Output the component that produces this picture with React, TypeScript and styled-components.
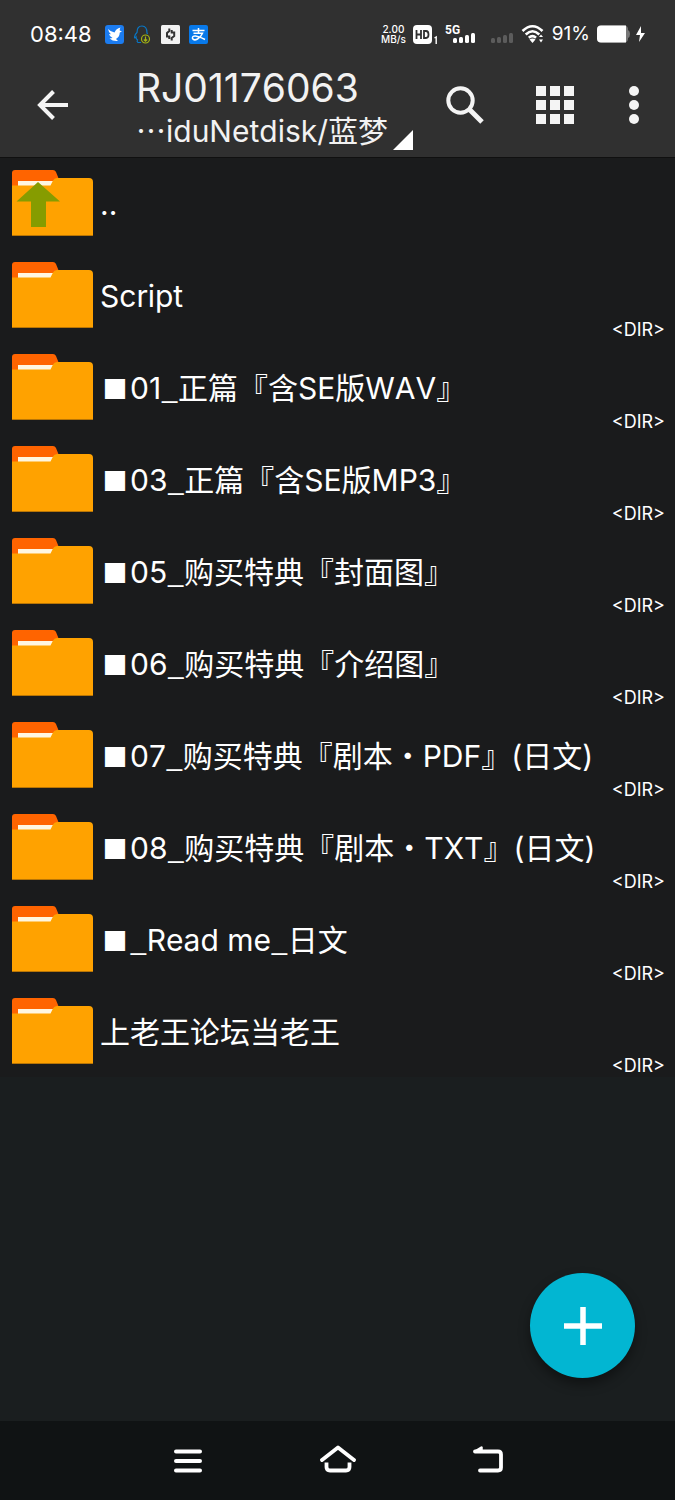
import React from "react";
import styled, { createGlobalStyle } from "styled-components";

const GlobalStyle = createGlobalStyle`
  *, *::before, *::after { box-sizing: border-box; }
  body {
    margin: 0;
    background: #1a1e1f;
    color: #fff;
    font-family: Inter, "Noto Sans CJK SC", sans-serif;
    font-kerning: none;
  }
`;

const Page = styled.div`
  display: flex;
  flex-direction: column;
  min-height: 100vh;
`;

const Header = styled.header`
  position: relative;
  z-index: 1;
  background: #303030;
  box-shadow: 0 1px 0 #101010;
`;

const StatusBar = styled.div`
  display: flex;
  align-items: center;
  justify-content: space-between;
  height: 66px;
  padding: 2px 29px 0 30px;
`;

const StatusGroup = styled.div<{ $gap: number }>`
  display: flex;
  align-items: center;
  gap: ${(p) => p.$gap}px;
  svg { display: block; flex: none; }
`;

const Clock = styled.time`
  margin-right: 4px;
  font-size: 22px;
  line-height: 32px;
`;

const Speed = styled.div`
  font-size: 10px;
  line-height: 10px;
  font-weight: 500;
  text-align: center;
`;

const Percent = styled.span`
  font-size: 19px;
  line-height: 24px;
`;

const Toolbar = styled.div`
  display: flex;
  align-items: flex-start;
  height: 91px;
  padding-right: 7px;
`;

const IconButton = styled.button<{ $width: number }>`
  display: flex;
  align-items: center;
  justify-content: center;
  flex: none;
  width: ${(p) => p.$width}px;
  height: 78px;
  padding: 0;
  border: 0;
  background: none;
  color: #f4f4f4;
  cursor: pointer;
`;

const TitleBlock = styled.div`
  flex: 1;
  min-width: 0;
  padding-left: 30px;
  color: #f2f2f2;
`;

const Title = styled.h1`
  margin: 0;
  font-size: 39px;
  line-height: 44px;
  font-weight: 400;
  white-space: nowrap;
`;

const PathButton = styled.button`
  display: flex;
  align-items: flex-end;
  gap: 5px;
  padding: 0;
  border: 0;
  background: none;
  color: inherit;
  font: inherit;
  font-size: 30px;
  line-height: 38px;
  white-space: nowrap;
  cursor: pointer;
`;

const PathText = styled.span`
  padding-top: 2px;
`;

const Main = styled.main`
  position: relative;
  flex: 1;
`;

const FileList = styled.ul`
  margin: 0;
  padding: 0;
  list-style: none;
  background: #1a1b1c;
`;

const FileRow = styled.button`
  display: flex;
  align-items: center;
  width: 100%;
  height: 92px;
  padding: 0 10px 0 12px;
  border: 0;
  background: none;
  color: #fff;
  font: inherit;
  font-kerning: none;
  text-align: left;
  cursor: pointer;
  svg { display: block; flex: none; }
`;

const FileName = styled.span`
  flex: 1;
  min-width: 0;
  padding: 2px 0 0 7px;
  font-size: 30px;
  line-height: 40px;
  white-space: nowrap;
`;

const WideGlyph = styled.span`
  font-family: "Noto Sans CJK SC", sans-serif;
  line-height: 1;
`;

const Square = styled(WideGlyph)`
  display: inline-block;
  width: 30px;
  font-size: 25px;
  text-align: center;
`;

const FileKind = styled.span`
  align-self: flex-end;
  font-size: 18px;
  line-height: 22px;
`;

const AddButton = styled.button`
  position: absolute;
  right: 40px;
  bottom: 43px;
  display: flex;
  align-items: center;
  justify-content: center;
  width: 105px;
  height: 105px;
  padding: 0;
  border: 0;
  border-radius: 50%;
  background: #02b6d2;
  box-shadow: 0 6px 12px rgba(0, 0, 0, 0.4);
  cursor: pointer;
`;

const NavBar = styled.nav`
  display: flex;
  justify-content: center;
  height: 79px;
  background: #101314;
`;

const NavButton = styled(IconButton)`
  height: 79px;
`;

const Folder = ({ up }: { up?: boolean }) => (
  <svg width="81" height="66" viewBox="0 0 81 66" aria-hidden="true">
    <path d="M0 20V3Q0 0 3 0H41Q43 0 44 2L48 12V20Z" fill="#ff6400" />
    <path d="M6 11H42L39 16H6Z" fill="#fff6e0" />
    <path d="M0 15.5H38.5L41 10.5Q42.3 8 45 8H77Q81 8 81 12V66H0Z" fill="#ffa200" />
    <path d="M0 65.500H81" stroke="#b87506" strokeWidth="1" />
    {up && <path d="M26 12L48 31.500H34V57H19V31.500H4.500Z" fill="#869c00" />}
  </svg>
);

const Signal = ({ dim }: { dim?: boolean }) => (
  <g fill={dim ? "#5c5c5c" : "#fff"}>
    <rect x="0" y="14" width="4" height="5" rx="1.500" />
    <rect x="6" y="13" width="4" height="6" rx="1.500" />
    <rect x="12" y="11" width="4" height="8" rx="1.500" />
    <rect x="18" y="9" width="4" height="10" rx="1.500" />
  </g>
);

// Underscores and squares take their shapes from the CJK family.
const renderName = (name: string) =>
  name.split(/([■_])/).map((part, i) => {
    if (part === "■") return <Square key={i}>{part}</Square>;
    if (part === "_") return <WideGlyph key={i}>{part}</WideGlyph>;
    return part;
  });

const files = [
  "Script",
  "■01_正篇『含SE版WAV』",
  "■03_正篇『含SE版MP3』",
  "■05_购买特典『封面图』",
  "■06_购买特典『介绍图』",
  "■07_购买特典『剧本・PDF』(日文)",
  "■08_购买特典『剧本・TXT』(日文)",
  "■_Read me_日文",
  "上老王论坛当老王",
];

export default function App() {
  return (
    <Page lang="zh-CN">
      <GlobalStyle />
      <Header>
        <StatusBar>
          <StatusGroup $gap={9}>
            <Clock>08:48</Clock>
            <svg width="19" height="19" viewBox="0 0 19 19" aria-hidden="true">
              <rect width="19" height="19" rx="3" fill="#1c7cf0" />
              <path d="M3 4Q6 7 9.500 7.500Q11 3.500 15.500 2.500Q14.500 4 14.700 5.500L17 6.500L14.800 7.500Q14.500 12 11 14L13 16Q8 16.500 4.500 13.500L7.500 13Q4.500 11.500 4 9L6 9.200Q3.500 7 3 4Z" fill="#fff" />
            </svg>
            <svg width="19" height="19" viewBox="0 0 19 19" fill="none" aria-hidden="true">
              <path d="M8 17.500H5Q3.500 16.500 4.500 15Q3 14 3 12Q1.500 14 1.500 12Q2 9 4 7.500Q4 1 9 1Q14 1 14 8L14.500 9" stroke="#0878c8" strokeWidth="1.200" />
              <circle cx="12.500" cy="14" r="4" stroke="#a4b414" strokeWidth="1.200" />
              <path d="M12.500 11.500V16M10.800 14.500L12.500 16.200L14.200 14.500" stroke="#a4b414" strokeWidth="1.200" />
            </svg>
            <svg width="19" height="19" viewBox="0 0 19 19" fill="none" aria-hidden="true">
              <rect width="19" height="19" rx="1.500" fill="#f2f2f2" />
              <path d="M8.300 3.500V6L6 8V11.500H8.300V14M10.700 15.500V13L13.200 11V7.500H10.700V5" stroke="#333" strokeWidth="2" />
            </svg>
            <svg width="19" height="19" viewBox="0 0 19 19" fill="none" aria-hidden="true">
              <rect width="19" height="19" rx="2" fill="#0879ea" />
              <path d="M3.500 5.500H15.500M9.500 3V8M4.500 8.300H13.500Q12 12 8.500 14Q5 16 3.500 13.500Q3 10.800 6.500 11Q10 11.500 16 14.500" stroke="#fff" strokeWidth="1.500" />
            </svg>
          </StatusGroup>
          <StatusGroup $gap={7}>
            <Speed>
              <div>2.00</div>
              <div>MB/s</div>
            </Speed>
            <svg width="25" height="19" viewBox="0 0 25 19" aria-hidden="true">
              <rect width="19" height="19" rx="4" fill="#fff" />
              <path d="M3.500 5V14M8 5V14M3.500 9.500H8M11 6H13Q15.500 6 15.500 9.500Q15.500 13 13 13H11Z" fill="none" stroke="#303030" strokeWidth="1.800" />
              <path d="M21.500 13L23.200 12V19" fill="none" stroke="#fff" strokeWidth="1.400" />
            </svg>
            <svg width="69" height="20" viewBox="0 0 69 20" aria-label="5G">
              <text x="0" y="10" fill="#fff" fontFamily="Roboto, sans-serif" fontSize="12" fontWeight="700">5G</text>
              <g transform="translate(8 0)"><Signal /></g>
              <g transform="translate(46 0)"><Signal dim /></g>
            </svg>
            <svg width="24" height="20" viewBox="0 0 24 20" fill="none" aria-hidden="true">
              <path d="M1.500 7Q11.500 -2.500 21.500 7M4.700 10.500Q11.500 4 18.300 10.500M7.800 13.700Q11.500 10.500 15 13.700" stroke="#fff" strokeWidth="2.600" />
              <path d="M8.500 15.500Q11.500 13.500 14.500 15.500L11.500 19Z" fill="#fff" />
              <path d="M18 13L20 10.500L22 13ZM18 15.500H22L20 18.500Z" fill="#fff" />
            </svg>
            <Percent>91%</Percent>
            <svg width="49" height="18" viewBox="0 0 49 18" aria-hidden="true">
              <rect x="0" y="0.500" width="31" height="17" rx="4" fill="#777" />
              <path d="M4 0.500H29V17.500H4Q0 17.500 0 13.500V4.500Q0 0.500 4 0.500Z" fill="#fff" />
              <path d="M31 5Q33 6 33 9Q33 12 31 13Z" fill="#777" />
              <path d="M44 1L39 10H43L42 17L48 8H44Z" fill="#fff" />
            </svg>
          </StatusGroup>
        </StatusBar>
        <Toolbar>
          <IconButton $width={106} aria-label="返回">
            <svg width="32" height="30" viewBox="0 0 32 30" fill="none" stroke="currentColor" strokeWidth="4">
              <path d="M31 15H3M16.500 1.500L3 15L16.500 28.500" />
            </svg>
          </IconButton>
          <TitleBlock>
            <Title>RJ01176063</Title>
            <PathButton>
              <PathText>⋯iduNetdisk/蓝梦</PathText>
              <svg width="20" height="20" viewBox="0 0 20 20" aria-hidden="true">
                <path d="M20 0V20H0Z" fill="#fff" />
              </svg>
            </PathButton>
          </TitleBlock>
          <IconButton $width={90} aria-label="搜索">
            <svg width="38" height="38" viewBox="0 0 38 38" fill="none" stroke="currentColor">
              <circle cx="14.500" cy="14.500" r="12.200" strokeWidth="4" />
              <path d="M23.500 23.500L36 36" strokeWidth="5" />
            </svg>
          </IconButton>
          <IconButton $width={90} aria-label="网格视图">
            <svg width="38" height="38" viewBox="0 0 38 38" fill="currentColor">
              {[0, 14, 28].map((y) =>
                [0, 14, 28].map((x) => <rect key={`${x}-${y}`} x={x} y={y} width="10" height="10" />)
              )}
            </svg>
          </IconButton>
          <IconButton $width={68} aria-label="更多">
            <svg width="10" height="38" viewBox="0 0 10 38" fill="currentColor">
              <circle cx="5" cy="5" r="5" />
              <circle cx="5" cy="19" r="5" />
              <circle cx="5" cy="33" r="5" />
            </svg>
          </IconButton>
        </Toolbar>
      </Header>
      <Main>
        <FileList>
          <li>
            <FileRow>
              <Folder up />
              <FileName>..</FileName>
            </FileRow>
          </li>
          {files.map((name) => (
            <li key={name}>
              <FileRow>
                <Folder />
                <FileName>{renderName(name)}</FileName>
                <FileKind>&lt;DIR&gt;</FileKind>
              </FileRow>
            </li>
          ))}
        </FileList>
        <AddButton aria-label="新建">
          <svg width="38" height="38" viewBox="0 0 38 38" stroke="#fff" strokeWidth="5.500">
            <path d="M19 0V38M0 19H38" />
          </svg>
        </AddButton>
      </Main>
      <NavBar>
        <NavButton $width={150} aria-label="最近任务">
          <svg width="30" height="24" viewBox="0 0 30 24" stroke="#fff" strokeWidth="4" strokeLinecap="round">
            <path d="M3 2.500H27M3 12H27M3 21.500H27" />
          </svg>
        </NavButton>
        <NavButton $width={150} aria-label="主屏幕">
          <svg width="36" height="32" viewBox="0 0 36 32" fill="none" stroke="#fff" strokeWidth="3.800" strokeLinecap="round" strokeLinejoin="round">
            <path d="M2 15L18 2.500L34 15" />
            <path d="M6.500 17.500V22Q6.500 25.500 10 25.500H26Q29.500 25.500 29.500 22V17.500" strokeLinecap="butt" />
          </svg>
        </NavButton>
        <NavButton $width={150} aria-label="后退">
          <svg width="30" height="32" viewBox="0 0 30 32" fill="none" stroke="#fff" strokeWidth="3.800" strokeLinecap="round" strokeLinejoin="round">
            <path d="M2 6.500H25Q28 6.500 28 9.500V22.500Q28 25.500 25 25.500H7" />
            <path d="M2 6.500L8.500 2.500V6Z" fill="#fff" strokeWidth="2.500" />
          </svg>
        </NavButton>
      </NavBar>
    </Page>
  );
}
